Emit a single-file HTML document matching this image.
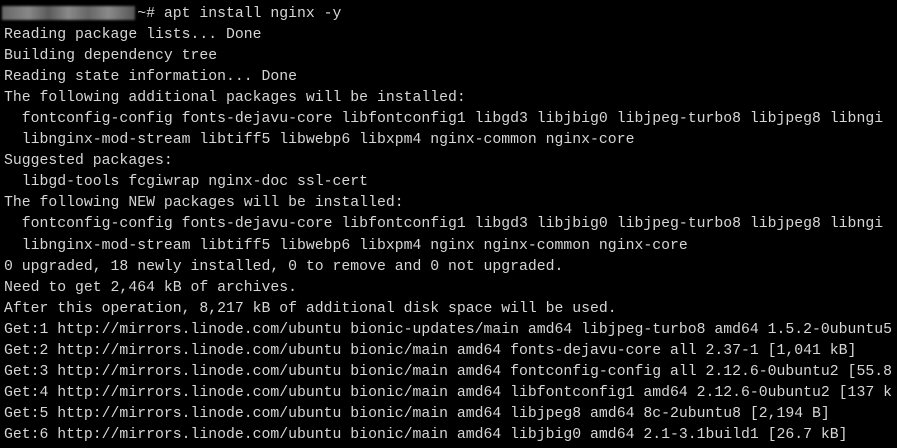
<!DOCTYPE html>
<html><head><style>
html,body{margin:0;padding:0;background:#000;width:897px;height:448px;overflow:hidden}
pre{margin:0;position:absolute;left:4px;top:4px;width:893px;overflow:hidden;font-family:"Liberation Mono",monospace;font-size:14.8px;line-height:21.05px;color:#d6d6d6;white-space:pre}
.blur{position:absolute;left:2px;top:6px;width:133px;height:14px;background:linear-gradient(90deg,#666,#888 20%,#5a5a5a 35%,#8a8a8a 50%,#666 65%,#8a8a8a 80%,#555);filter:blur(1px)}
</style></head><body>
<div class="blur"></div>
<pre>               ~# apt install nginx -y
Reading package lists... Done
Building dependency tree
Reading state information... Done
The following additional packages will be installed:
  fontconfig-config fonts-dejavu-core libfontconfig1 libgd3 libjbig0 libjpeg-turbo8 libjpeg8 libngi
  libnginx-mod-stream libtiff5 libwebp6 libxpm4 nginx-common nginx-core
Suggested packages:
  libgd-tools fcgiwrap nginx-doc ssl-cert
The following NEW packages will be installed:
  fontconfig-config fonts-dejavu-core libfontconfig1 libgd3 libjbig0 libjpeg-turbo8 libjpeg8 libngi
  libnginx-mod-stream libtiff5 libwebp6 libxpm4 nginx nginx-common nginx-core
0 upgraded, 18 newly installed, 0 to remove and 0 not upgraded.
Need to get 2,464 kB of archives.
After this operation, 8,217 kB of additional disk space will be used.
Get:1 http://mirrors.linode.com/ubuntu bionic-updates/main amd64 libjpeg-turbo8 amd64 1.5.2-0ubuntu5
Get:2 http://mirrors.linode.com/ubuntu bionic/main amd64 fonts-dejavu-core all 2.37-1 [1,041 kB]
Get:3 http://mirrors.linode.com/ubuntu bionic/main amd64 fontconfig-config all 2.12.6-0ubuntu2 [55.8
Get:4 http://mirrors.linode.com/ubuntu bionic/main amd64 libfontconfig1 amd64 2.12.6-0ubuntu2 [137 k
Get:5 http://mirrors.linode.com/ubuntu bionic/main amd64 libjpeg8 amd64 8c-2ubuntu8 [2,194 B]
Get:6 http://mirrors.linode.com/ubuntu bionic/main amd64 libjbig0 amd64 2.1-3.1build1 [26.7 kB]</pre>
</body></html>
